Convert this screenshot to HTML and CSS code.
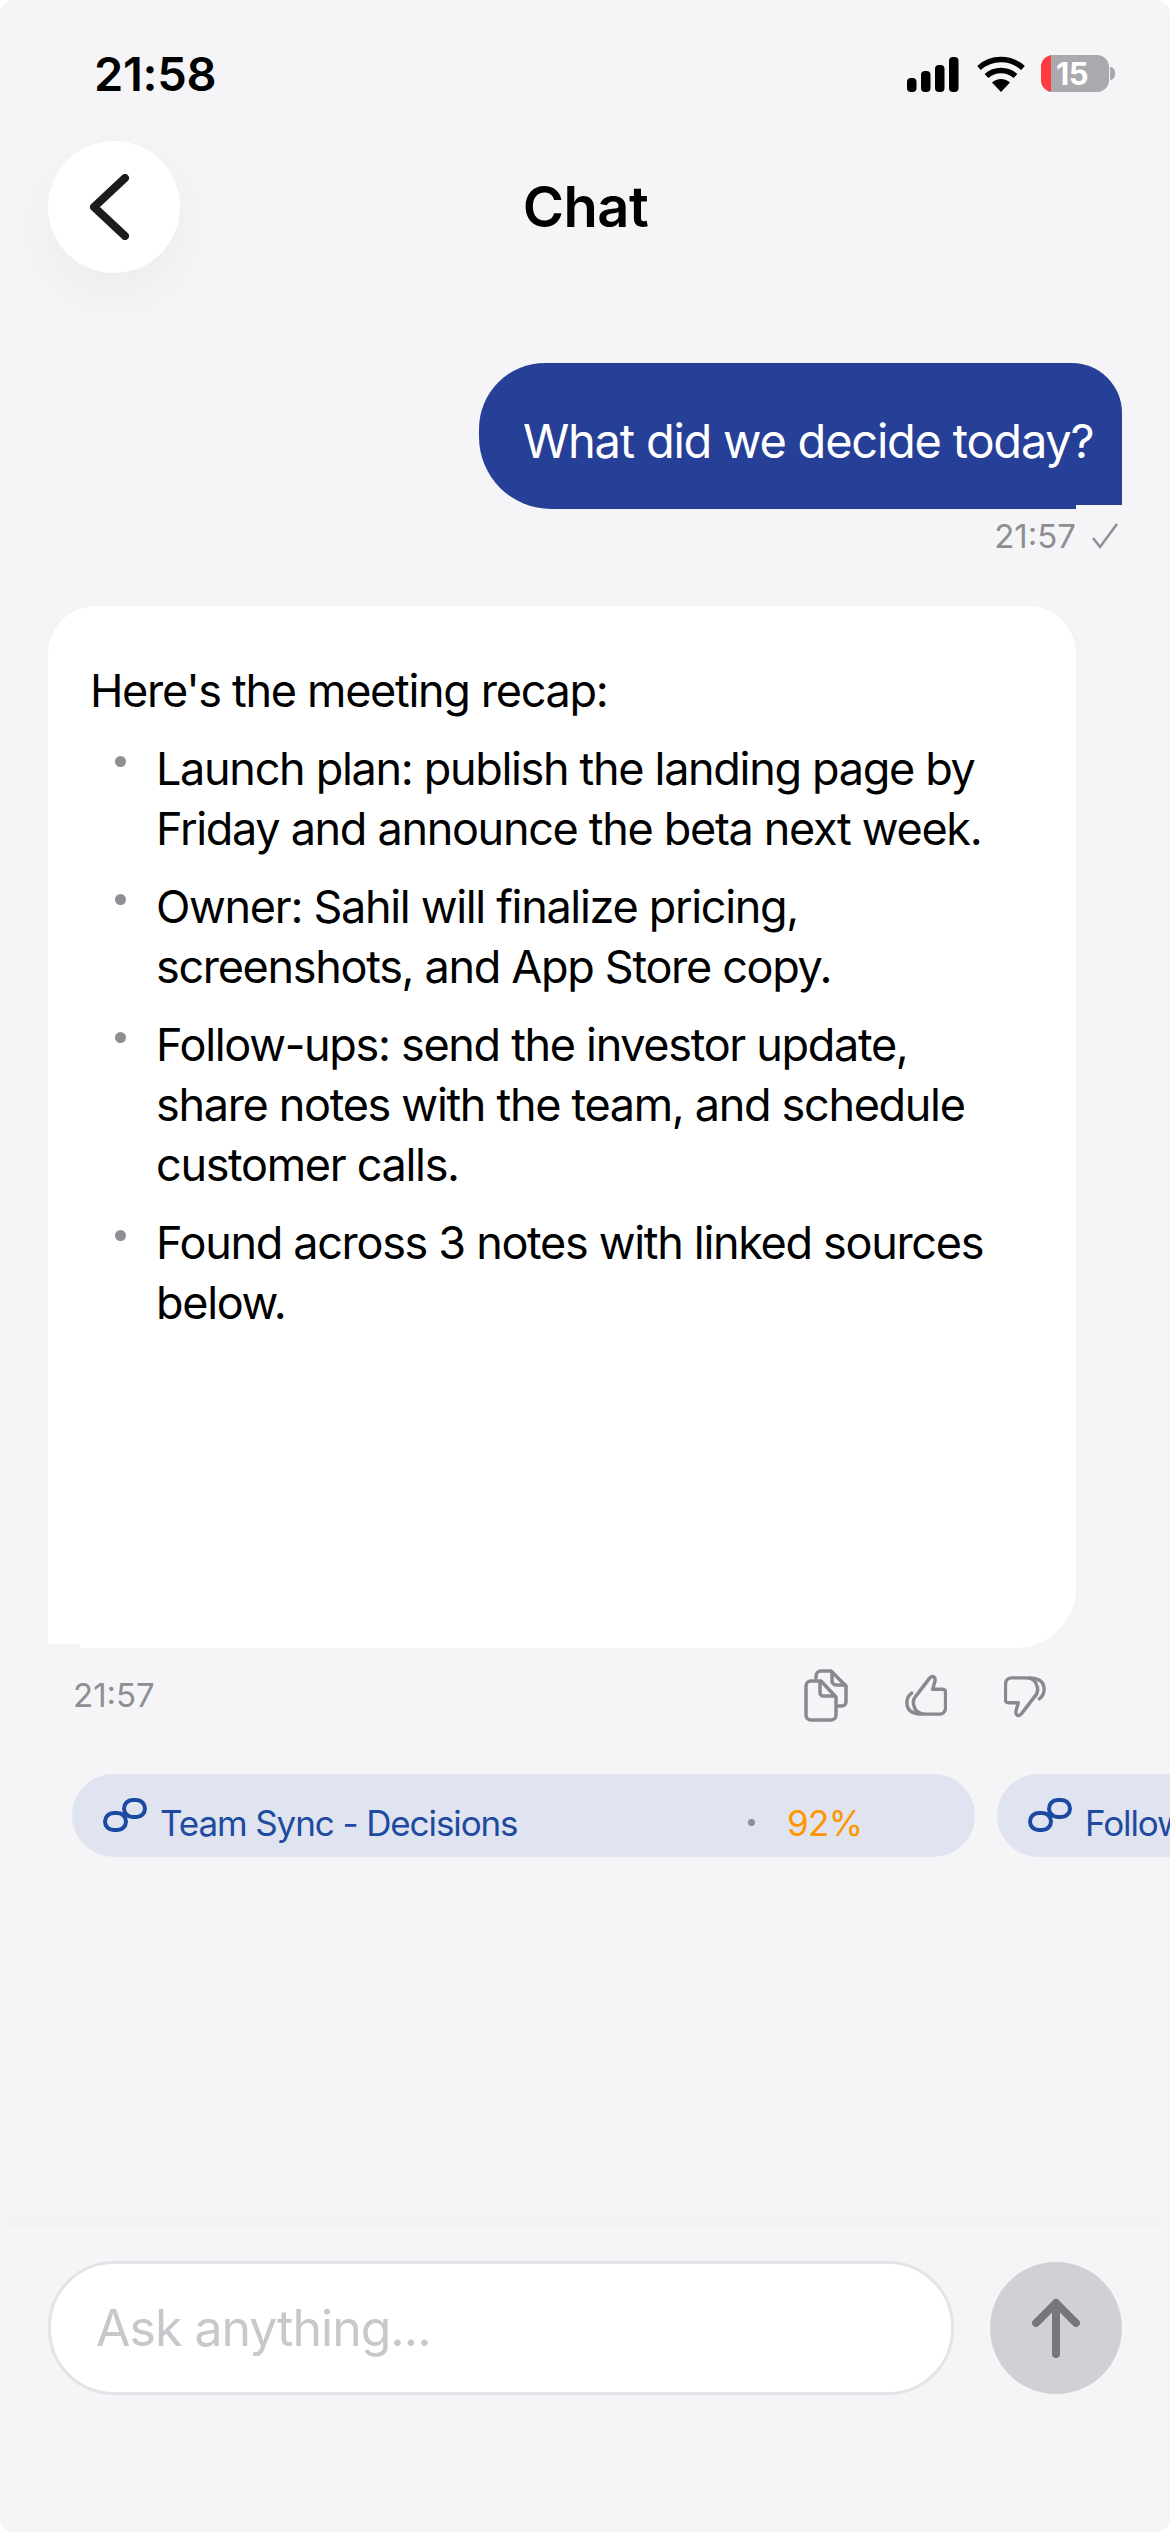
FILE: index.html
```html
<!DOCTYPE html>
<html lang="en">
<head>
<meta charset="utf-8">
<title>Chat</title>
<link rel="stylesheet" href="styles.css">
</head>
<body>
<main class="screen">
  <div class="status">
    <span class="clock">21:58</span>
    <div class="status-icons">
      <svg class="signal" width="52" height="35" viewBox="0 0 52 35"><rect x="0" y="21" width="9.5" height="14" rx="4"/><rect x="14" y="14" width="9.5" height="21" rx="4"/><rect x="28" y="8" width="9.5" height="27" rx="4"/><rect x="42" y="0" width="9.5" height="35" rx="4"/></svg>
      <svg class="wifi" width="50" height="36" viewBox="0 0 50 36"><path d="M25 36 16 26.500C21 21.800 29 21.800 34 26.500Z" fill="#000"/><path d="M10.500 20C18.500 12.500 31.500 12.500 39.500 20" fill="none" stroke="#000" stroke-width="5.500"/><path d="M3 12C15.500 .8 34.500 .8 47 12" fill="none" stroke="#000" stroke-width="5.500"/></svg>
      <div class="battery"><span class="battery-low"></span><span class="battery-num">15</span></div>
      <span class="battery-tip"></span>
    </div>
  </div>

  <header class="topbar">
    <button class="back" aria-label="Back"><svg width="44" height="66" viewBox="0 0 44 66"><path d="M38 4 7 33 38 62" fill="none" stroke="#1c1c1e" stroke-width="8" stroke-linecap="round" stroke-linejoin="round"/></svg></button>
    <h1 class="title">Chat</h1>
  </header>

  <section class="thread">
    <div class="user-msg">
      <div class="user-bubble">What did we decide today?</div>
      <div class="user-meta"><span>21:57</span><svg width="28" height="26" viewBox="0 0 28 26"><path d="M2 15 9 24 26 1" fill="none" stroke="#8e8e93" stroke-width="2.400"/></svg></div>
    </div>

    <article class="ai-bubble">
      <p class="intro">Here's the meeting recap:</p>
      <ul class="points">
        <li>Launch plan: publish the landing page by Friday and announce the beta next week.</li>
        <li>Owner: Sahil will finalize pricing, screenshots, and App Store copy.</li>
        <li>Follow-ups: send the investor update, share notes with the team, and schedule customer calls.</li>
        <li>Found across 3 notes with linked sources below.</li>
      </ul>
    </article>

    <div class="ai-meta">
      <span class="ai-time">21:57</span>
      <div class="actions">
        <svg class="copy" width="44" height="53" viewBox="0 0 44 53"><g fill="none" stroke="#8a8a8e" stroke-width="3.500" stroke-linejoin="round" stroke-linecap="round"><path d="M12 9V7a5 5 0 0 1 5-5H27L42 17V33a4 4 0 0 1-4 4H33"/><path d="M28 3V12a4 4 0 0 0 4 4H41"/><path d="M7 12H17L32 28V46a5 5 0 0 1-5 5H7a5 5 0 0 1-5-5V17a5 5 0 0 1 5-5Z"/><path d="M16 13V24a3 3 0 0 0 3 3H31"/></g></svg>
        <svg class="thumb" width="42" height="44" viewBox="0 0 44 46"><g fill="none" stroke="#8a8a8e" stroke-width="3.600" stroke-linejoin="round" stroke-linecap="round"><path d="M13 21 26 4C29 1 32 3 31.500 7L29 16H39C42 16 43 18 42.500 20V36C42 40 39 42 36 42H21C14 42 10 38 9 32 8 28 10 24 13 21Z"/><path d="M7 20C1 24 0 34 6 39 9 41 14 42 18 42"/></g></svg>
        <svg class="thumb thumb-down" width="42" height="44" viewBox="0 0 44 46"><g fill="none" stroke="#8a8a8e" stroke-width="3.600" stroke-linejoin="round" stroke-linecap="round"><path d="M13 21 26 4C29 1 32 3 31.500 7L29 16H39C42 16 43 18 42.500 20V36C42 40 39 42 36 42H21C14 42 10 38 9 32 8 28 10 24 13 21Z"/><path d="M7 20C1 24 0 34 6 39 9 41 14 42 18 42"/></g></svg>
      </div>
    </div>

    <div class="sources">
      <div class="pill pill-main">
        <svg class="link" width="44" height="34" viewBox="0 0 44 34"><g fill="none" stroke="#1c4aa3" stroke-width="4"><rect x="2" y="15" width="21" height="17" rx="8.500"/><rect x="21" y="2" width="21" height="17" rx="8.500"/></g></svg>
        <span class="pill-label">Team Sync - Decisions</span>
        <span class="pill-dot"></span>
        <span class="pill-score">92%</span>
      </div>
      <div class="pill pill-next">
        <svg class="link" width="44" height="34" viewBox="0 0 44 34"><g fill="none" stroke="#1c4aa3" stroke-width="4"><rect x="2" y="15" width="21" height="17" rx="8.500"/><rect x="21" y="2" width="21" height="17" rx="8.500"/></g></svg>
        <span class="pill-label">Follow-ups</span>
      </div>
    </div>
  </section>

  <footer class="composer">
    <div class="input">Ask anything...</div>
    <button class="send" aria-label="Send"><svg width="50" height="60" viewBox="0 0 50 60"><path d="M25 56V5M5 25 25 5 45 25" fill="none" stroke="#77777b" stroke-width="8" stroke-linecap="round" stroke-linejoin="round"/></svg></button>
  </footer>
</main>
</body>
</html>
```

FILE: styles.css
```css
* { box-sizing: border-box; }
html, body { margin: 0; padding: 0; background: #fff; }
body { width: 1170px; height: 2532px; overflow: hidden; font-family: Inter, "Liberation Sans", sans-serif; }

.screen {
  width: 1170px;
  height: 2532px;
  background: #f5f5f8;
  border-radius: 14px;
  overflow: hidden;
  display: flex;
  flex-direction: column;
}

.status {
  height: 141px;
  padding: 0 55px 0 94px;
  display: flex;
  justify-content: space-between;
  align-items: flex-start;
}
.clock { font-size: 47px; font-weight: 600; line-height: 56px; margin-top: 46px; letter-spacing: -0.3px; color: #000; }
.status-icons { display: flex; align-items: flex-start; margin-top: 55px; }
.signal { margin-top: 2px; fill: #000; }
.wifi { margin: 1px 0 0 17px; }
.battery {
  margin-left: 15px;
  width: 68px;
  height: 37px;
  border-radius: 12px;
  background: #a9a9ae;
  overflow: hidden;
  display: flex;
  align-items: center;
}
.battery-low { width: 10px; height: 100%; background: #ff3b40; }
.battery-num { font-size: 31px; font-weight: 700; color: #fff; margin-left: 5px; line-height: 37px; letter-spacing: -0.5px; }
.battery-tip { width: 5px; height: 13px; margin: 12px 0 0 1px; background: #a9a9ae; border-radius: 0 7px 7px 0; }

.topbar { height: 132px; padding-left: 48px; position: relative; display: flex; align-items: center; }
.back {
  width: 132px;
  height: 132px;
  border: 0;
  padding: 0 10px 0 0;
  border-radius: 50%;
  background: #fff;
  box-shadow: 0 20px 60px rgba(0, 0, 0, .045);
  display: flex;
  align-items: center;
  justify-content: center;
}
.title { position: absolute; left: 0; right: 0; top: 0; margin: 0; text-align: center; font-size: 56px; font-weight: 600; line-height: 132px; letter-spacing: -0.5px; color: #000; padding-left: 1px; }

.thread { flex: 1; padding-top: 90px; overflow: hidden; }

.user-msg { padding-right: 48px; display: flex; flex-direction: column; align-items: flex-end; }
.user-bubble {
  width: 643px;
  height: 146px;
  position: relative;
  padding-left: 44px;
  border-radius: 66px 50px 0 72px;
  background: #274097;
  color: #fff;
  font-size: 47px;
  line-height: 156px;
  letter-spacing: -1.24px;
  white-space: nowrap;
}
.user-bubble::after { content: ""; position: absolute; right: 0; bottom: 0; width: 46px; height: 4px; background: #f5f5f8; }
.user-meta { height: 42px; margin-top: 6px; padding-right: 3px; display: flex; align-items: center; gap: 15px; color: #8e8e93; font-size: 33px; letter-spacing: 0; }

.ai-bubble {
  margin: 49px 0 0 48px;
  width: 1028px;
  height: 1042px;
  position: relative;
  padding: 55px 90px 0 42px;
  background: #fff;
  border-radius: 48px 48px 60px 0;
  box-shadow: 0 0 24px rgba(0, 0, 0, .012);
  color: #000;
  font-size: 45px;
  line-height: 60px;
  letter-spacing: -1.32px;
}
.ai-bubble::after { content: ""; position: absolute; left: 0; bottom: 0; width: 32px; height: 4px; background: #f5f5f8; }
.intro { margin: 0; }
.points { list-style: none; margin: 18px 0 0; padding: 0 0 0 66px; }
.points li { position: relative; margin-bottom: 18px; }
.points li::before { content: ""; position: absolute; left: -41px; top: 17px; width: 11px; height: 11px; border-radius: 50%; background: #8e8e93; }

.ai-meta { height: 90px; margin-top: 2px; padding: 0 124px 0 73px; display: flex; align-items: center; justify-content: space-between; }
.ai-time { font-size: 33px; letter-spacing: 0; color: #8e8e93; }
.actions { display: flex; align-items: center; gap: 57px; }
.thumb { margin-top: 2px; }
.thumb-down { transform: rotate(180deg); }

.sources { margin-top: 34px; padding-left: 72px; display: flex; gap: 22px; width: 1400px; }
.pill {
  height: 83px;
  border-radius: 42px;
  background: #dfe4f0;
  color: #1e4aa0;
  display: flex;
  align-items: center;
  padding-left: 30px;
  font-size: 35px;
  letter-spacing: -1.1px;
}
.pill-main { width: 903px; }
.pill-next { width: 400px; }
.link { margin: 0 0 2px 1px; }
.pill-label { margin: 14px 0 0 13px; white-space: nowrap; }
.pill-main .pill-label { width: 588px; }
.pill-dot { width: 7px; height: 7px; border-radius: 50%; background: #8e8e93; margin-top: 14px; }
.pill-score { margin: 14px 0 0 32px; color: #ff9500; letter-spacing: -0.6px; }

.composer {
  height: 306px;
  padding: 35px 48px 0;
  background: #f5f5f8;
  box-shadow: 0 -6px 18px rgba(0, 0, 0, .018);
  display: flex;
  align-items: flex-start;
  justify-content: space-between;
}
.input {
  width: 906px;
  height: 134px;
  padding-left: 45px;
  border: 3px solid #e4e4e8;
  border-radius: 66px;
  background: #fff;
  color: #c7c7cc;
  font-size: 50px;
  line-height: 128px;
  letter-spacing: -1px;
}
.send {
  width: 132px;
  height: 132px;
  margin-top: 1px;
  border: 0;
  padding: 0;
  border-radius: 50%;
  background: #d1d1d5;
  display: flex;
  align-items: center;
  justify-content: center;
}
```
